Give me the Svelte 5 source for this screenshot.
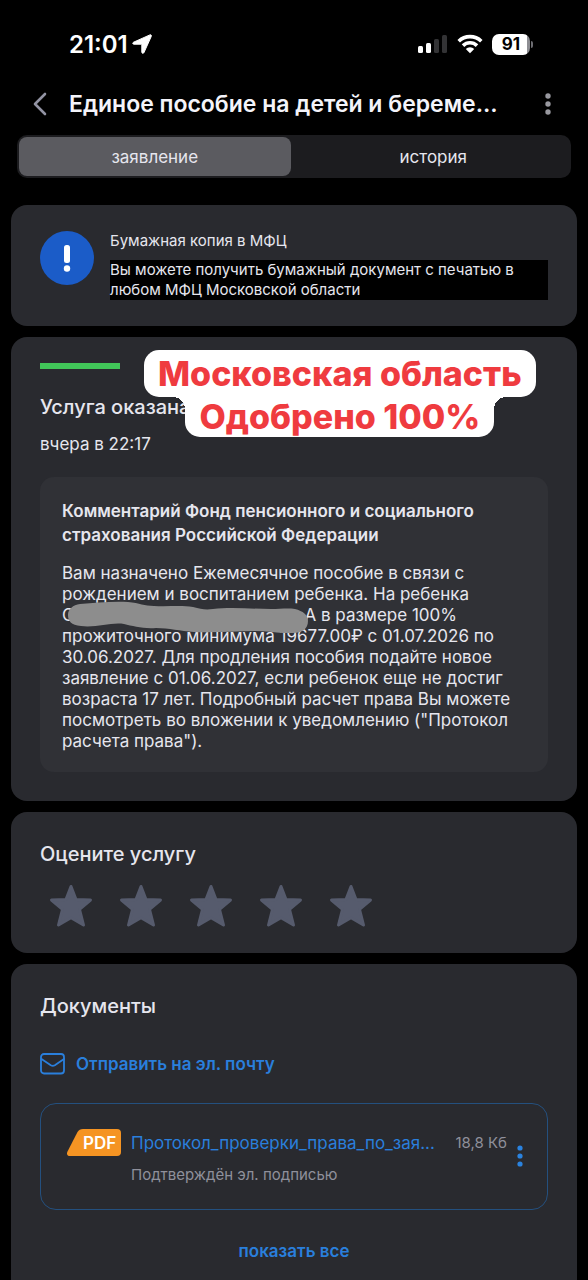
<script>
  let tab = "request"
  let rating = 0

  const stars = [1, 2, 3, 4, 5]
  const documents = [
    {
      name: "Протокол_проверки_права_по_зая...",
      size: "18,8 Кб",
      note: "Подтверждён эл. подписью",
    },
  ]
</script>

<div class="screen">
  <div class="status-bar">
    <div class="clock">
      <span>21:01</span>
      <svg width="20" height="20" viewBox="0 0 20 20" aria-hidden="true">
        <path
          d="M17.9.9 1.6 8.2c-1.3.6-1 2 .3 2h7.5c.3 0 .4.2.4.5v7.4c0 1.4 1.6 1.7 2.2.4L19.3 2.3c.4-1-.4-1.8-1.4-1.4Z"
          fill="#fff"
          stroke="#fff"
          stroke-linejoin="round"
        />
      </svg>
    </div>
    <div class="indicators">
      <svg width="30" height="20" viewBox="0 0 30 20" aria-hidden="true">
        <rect x="0" y="12" width="5" height="7" rx="1.5" fill="#fff" />
        <rect x="8" y="9" width="5" height="10" rx="1.5" fill="#fff" />
        <rect x="16" y="5" width="5" height="14" rx="1.5" fill="#333335" />
        <rect x="24" y="1" width="5" height="18" rx="1.5" fill="#333335" />
      </svg>
      <svg width="26" height="20" viewBox="0 0 26 20" aria-hidden="true">
        <g fill="none" stroke="#fff" stroke-width="3.6">
          <path d="M1.7 7.2a16.2 16.2 0 0 1 22.6 0" />
          <path d="M6 11.6a10 10 0 0 1 14 0" />
        </g>
        <path d="M8.8 14.9a6 6 0 0 1 8.4 0L13 19.3Z" fill="#fff" />
      </svg>
      <div class="battery"><span>91</span></div>
    </div>
  </div>

  <header>
    <button class="icon-button" aria-label="Назад">
      <svg width="14" height="24" viewBox="0 0 14 24" aria-hidden="true">
        <path
          d="M12 2 2 12l10 10"
          fill="none"
          stroke="#9293a3"
          stroke-width="2.6"
          stroke-linecap="round"
          stroke-linejoin="round"
        />
      </svg>
    </button>
    <h1>Единое пособие на детей и береме...</h1>
    <button class="icon-button" aria-label="Меню">
      <svg width="6" height="24" viewBox="0 0 6 24" fill="#98989f" aria-hidden="true">
        <circle cx="3" cy="4" r="2.7" />
        <circle cx="3" cy="12" r="2.7" />
        <circle cx="3" cy="20" r="2.7" />
      </svg>
    </button>
  </header>

  <nav class="tabs">
    <button class:active={tab === "request"} on:click={() => (tab = "request")}>
      заявление
    </button>
    <button class:active={tab === "history"} on:click={() => (tab = "history")}>
      история
    </button>
  </nav>

  <main>
    <section class="card notice">
      <svg width="54" height="54" viewBox="0 0 54 54" aria-hidden="true">
        <circle cx="27" cy="27" r="27" fill="#1b5cc8" />
        <rect x="24" y="14" width="6" height="18" rx="2.5" fill="#fff" />
        <circle cx="27" cy="37.5" r="3.2" fill="#fff" />
      </svg>
      <div class="notice-body">
        <h2>Бумажная копия в МФЦ</h2>
        <p>Вы можете получить бумажный документ с печатью в любом МФЦ Московской области</p>
      </div>
    </section>

    <section class="card result">
      <div class="progress"></div>
      <h2>Услуга оказана</h2>
      <time>вчера в 22:17</time>

      <div class="comment">
        <h3>Комментарий Фонд пенсионного и социального страхования Российской Федерации</h3>
        <p>
          Вам назначено Ежемесячное пособие в связи с<br />
          рождением и воспитанием ребенка. На ребенка<br />
          С<span class="redacted">
            <svg viewBox="0 0 240 32" preserveAspectRatio="none" aria-hidden="true">
              <path
                d="M12 3C28 2 44 0 60 1c12 1 16 4 26 4 14 1 26-1 39 1 8 2 12 3 20 2 18-2 40 0 58 0 9 0 17-1 24 0 8 2 13 6 13 12 0 8-6 12-15 12-10 1-23-2-38-2-20 0-40 2-61 1-14-1-25-4-38-4-13 1-23-2-32-4-13-2-28 4-43 2C3 24 0 20 0 14 0 8 5 4 12 3Z"
                fill="#8d8d8d"
              />
            </svg>
          </span>А в размере 100%<br />
          прожиточного минимума 19677.00₽ с 01.07.2026 по<br />
          30.06.2027. Для продления пособия подайте новое<br />
          заявление с 01.06.2027, если ребенок еще не достиг<br />
          возраста 17 лет. Подробный расчет права Вы можете<br />
          посмотреть во вложении к уведомлению ("Протокол<br />
          расчета права").
        </p>
      </div>

      <div class="sticker">
        <span class="line top">Московская область</span>
        <span class="line bottom">Одобрено 100%</span>
      </div>
    </section>

    <section class="card rating">
      <h2>Оцените услугу</h2>
      <div class="stars">
        {#each stars as star}
          <button
            class:on={star <= rating}
            aria-label="Оценка {star}"
            on:click={() => (rating = star)}
          >
            <svg width="44" height="44" viewBox="0 0 44 44" aria-hidden="true">
              <path
                d="m22 2.5 4.900 12.900 14.600.600L30.500 25.300 34.500 41 22 33.800 9.500 41l4-15.700L2.500 16l14.600-.600Z"
                fill="currentColor"
                stroke="currentColor"
                stroke-width="3"
                stroke-linejoin="round"
              />
            </svg>
          </button>
        {/each}
      </div>
    </section>

    <section class="card documents">
      <h2>Документы</h2>
      <a class="mail" href="#mail">
        <svg width="26" height="22" viewBox="0 0 26 22" aria-hidden="true">
          <g
            fill="none"
            stroke="currentColor"
            stroke-width="1.8"
            stroke-linecap="round"
            stroke-linejoin="round"
          >
            <rect x="1" y="1" width="23" height="19.5" rx="3" />
            <path d="m1.500 6 9.300 6.200c1.300.8 2.700.8 4 0L24 6" />
          </g>
        </svg>
        <span>Отправить на эл. почту</span>
      </a>

      {#each documents as doc}
        <div class="file">
          <svg width="54" height="28" viewBox="0 0 54 28" aria-hidden="true">
            <path
              d="M16 0h34a4 4 0 0 1 4 4v19a4 4 0 0 1-4 4H3c-2.500 0-3.700-2-2.600-4.200L10.500 3C11.700 1 13.500 0 16 0Z"
              fill="#f59423"
            />
            <text x="16" y="20" class="pdf-label">PDF</text>
          </svg>
          <div class="file-body">
            <div class="file-row">
              <a href="#document">{doc.name}</a>
              <span class="size">{doc.size}</span>
            </div>
            <p>{doc.note}</p>
          </div>
          <button class="icon-button" aria-label="Действия с документом">
            <svg width="6" height="22" viewBox="0 0 6 22" fill="#2a83e0" aria-hidden="true">
              <circle cx="3" cy="3" r="2.6" />
              <circle cx="3" cy="11" r="2.6" />
              <circle cx="3" cy="19" r="2.6" />
            </svg>
          </button>
        </div>
      {/each}

      <button class="show-all">показать все</button>
    </section>
  </main>
</div>

<style>
  :global(body) {
    margin: 0;
    background: #000;
  }

  .screen {
    box-sizing: border-box;
    min-height: 100vh;
    display: flex;
    flex-direction: column;
    background: #000;
    color: #e6e6ee;
    font-family: Inter, Roboto, sans-serif;
    font-size: 17px;
  }

  h1,
  h2,
  h3,
  p {
    margin: 0;
  }

  a {
    color: #2a7fdc;
    text-decoration: none;
  }

  button {
    padding: 0;
    border: 0;
    background: none;
    color: inherit;
    font: inherit;
    cursor: pointer;
  }

  svg {
    display: block;
    flex: none;
  }

  .status-bar {
    display: flex;
    align-items: center;
    justify-content: space-between;
    height: 28px;
    padding: 30px 58px 0 69px;
  }

  .clock,
  .indicators {
    display: flex;
    align-items: center;
  }

  .clock {
    gap: 4px;
    color: #fff;
    font-size: 24px;
    font-weight: 600;
  }

  .indicators {
    gap: 9px;
  }

  .battery {
    position: relative;
    width: 38px;
    height: 21px;
    border-radius: 7px;
    background: linear-gradient(90deg, #fff 91%, #8e8e93 91%);
    color: #000;
    font-size: 17px;
    font-weight: 700;
    line-height: 21px;
    text-align: center;
  }

  .battery::after {
    content: "";
    position: absolute;
    top: 7px;
    right: -3px;
    width: 2px;
    height: 7px;
    border-radius: 0 2px 2px 0;
    background: #6d6d72;
  }

  header {
    display: flex;
    align-items: center;
    height: 40px;
    padding: 26px 30px 0;
  }

  .icon-button {
    flex: none;
    display: flex;
    justify-content: center;
    width: 20px;
  }

  h1 {
    flex: 1;
    min-width: 0;
    margin: 0 20px 0 19px;
    overflow: hidden;
    color: #f4f4fa;
    font-size: 23px;
    font-weight: 600;
    line-height: 32px;
    text-overflow: ellipsis;
    white-space: nowrap;
  }

  .tabs {
    display: flex;
    gap: 7px;
    margin: 11px 17px 0;
    padding: 2px;
    border-radius: 10px;
    background: #1c1c1f;
  }

  .tabs button {
    flex: 1;
    height: 39px;
    border-radius: 8px;
  }

  .tabs button.active {
    background: #5b5b60;
  }

  main {
    flex: 1;
    display: flex;
    flex-direction: column;
    gap: 11px;
    padding: 27px 11px 0;
  }

  .card {
    padding: 26px 29px;
    border-radius: 16px;
    background: #292a2f;
  }

  .card h2 {
    font-size: 20px;
    font-weight: 500;
    line-height: 28px;
  }

  .notice {
    display: flex;
    gap: 16px;
  }

  .notice-body {
    flex: 1;
  }

  .notice .notice-body h2 {
    font-size: 15px;
    font-weight: 400;
    line-height: 20px;
  }

  .notice-body p {
    margin-top: 9px;
    background: #000;
    font-size: 15px;
    line-height: 20px;
  }

  .result {
    position: relative;
    padding-bottom: 29px;
  }

  .progress {
    width: 80px;
    height: 6px;
    margin-bottom: 24px;
    background: #41c659;
  }

  .result time {
    display: block;
    margin-top: 12px;
    line-height: 22px;
  }

  .comment {
    margin-top: 22px;
    padding: 22px 22px 20px;
    border-radius: 14px;
    background: #303136;
  }

  .comment h3 {
    margin-bottom: 16px;
    font-size: 17px;
    font-weight: 600;
    line-height: 24px;
  }

  .comment p {
    line-height: 21px;
  }

  .redacted {
    position: relative;
    display: inline-block;
    width: 230px;
    height: 12px;
  }

  .redacted svg {
    position: absolute;
    top: -8px;
    left: -6px;
    width: 240px;
    height: 32px;
  }

  .sticker {
    position: absolute;
    top: 13px;
    left: 133px;
    display: flex;
    flex-direction: column;
    align-items: center;
    color: #ef3b3f;
    font-size: 34px;
    font-weight: 800;
    line-height: 47px;
    white-space: nowrap;
  }

  .line {
    position: relative;
    padding: 0 14px;
    border-radius: 15px;
    background: #fff;
  }

  .line.bottom {
    border-radius: 0 0 15px 15px;
    line-height: 40px;
  }

  /* concave corners where the narrow line joins the wide one */
  .line.bottom::before,
  .line.bottom::after {
    content: "";
    position: absolute;
    top: 0;
    width: 12px;
    height: 12px;
  }

  .line.bottom::before {
    right: 100%;
    background: radial-gradient(circle at 0 100%, transparent 12px, #fff 12px);
  }

  .line.bottom::after {
    left: 100%;
    background: radial-gradient(circle at 100% 100%, transparent 12px, #fff 12px);
  }

  .rating {
    padding: 28px 29px 25px;
  }

  .stars {
    display: flex;
    gap: 26px;
    margin: 16px 9px 0;
  }

  .stars button {
    color: #565b6d;
  }

  .stars button.on {
    color: #f59423;
  }

  .documents {
    flex: 1;
    padding: 28px 29px 14px;
    border-radius: 16px 16px 0 0;
  }

  .mail {
    display: flex;
    align-items: center;
    gap: 10px;
    margin-top: 32px;
    font-weight: 600;
    line-height: 24px;
  }

  .file {
    display: flex;
    align-items: flex-start;
    margin-top: 27px;
    padding: 25px 17px 24px 26px;
    border: 1px solid #24507f;
    border-radius: 16px;
  }

  .pdf-label {
    fill: #fff;
    font-size: 17px;
    font-weight: 600;
  }

  .file-body {
    flex: 1;
    min-width: 0;
    margin-left: 10px;
  }

  .file-row {
    display: flex;
    align-items: center;
    justify-content: space-between;
    line-height: 28px;
  }

  .file-row a {
    overflow: hidden;
    text-overflow: ellipsis;
    white-space: nowrap;
  }

  .size,
  .file p {
    color: #8f909b;
    font-size: 15px;
    white-space: nowrap;
  }

  .file p {
    margin-top: 8px;
    line-height: 20px;
  }

  .file .icon-button {
    margin: 16px 0 0 3px;
  }

  .show-all {
    display: block;
    margin: 29px auto 0;
    color: #2a7fdc;
    font-weight: 600;
    line-height: 24px;
  }
</style>
